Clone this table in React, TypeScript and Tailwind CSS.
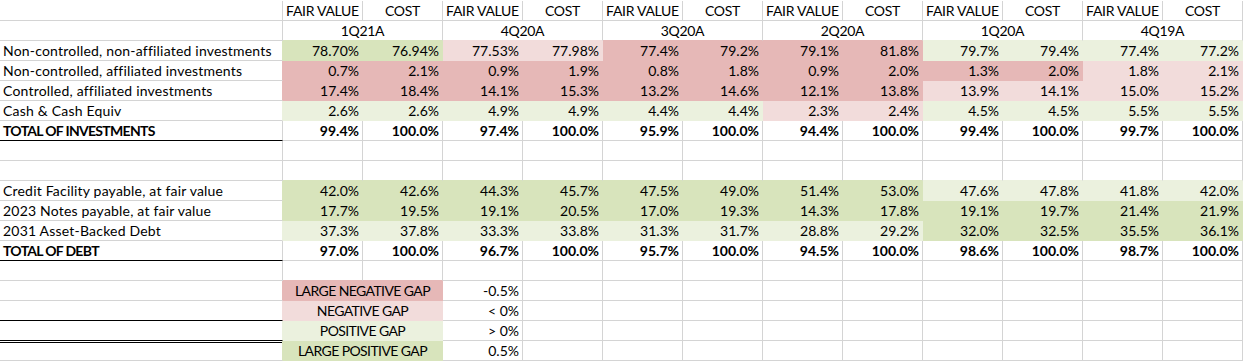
import React from "react";

type F = "DG" | "LG" | "DR" | "LP" | "";
type K = "label" | "labelBold" | "num" | "numBold" | "cap" | "legend" | "";
type Cell = {
  t?: string;
  f?: F;
  span?: number;
  a?: "l" | "c" | "r";
  k?: K;
  line?: "single" | "double";
};

const bg: Record<string, string> = {
  DG: "bg-[#d8e4bc]",
  LG: "bg-[#ebf1de]",
  DR: "bg-[#e6b8b7]",
  LP: "bg-[#f2dcdb]",
  "": "bg-white",
};
const br: Record<string, string> = {
  DG: "border-r-[#d8e4bc]",
  LG: "border-r-[#ebf1de]",
  DR: "border-r-[#e6b8b7]",
  LP: "border-r-[#f2dcdb]",
  "": "border-r-[#d4d4d4]",
};
const bb: Record<string, string> = {
  DG: "border-b-[#d8e4bc]",
  LG: "border-b-[#ebf1de]",
  DR: "border-b-[#e6b8b7]",
  LP: "border-b-[#f2dcdb]",
  "": "border-b-[#d4d4d4]",
  black: "border-b-black",
};
const kind: Record<string, string> = {
  label: "text-[14px] tracking-[0.2px]",
  labelBold: "text-[14px] font-bold tracking-[-0.7px]",
  num: "text-[14px]",
  numBold: "text-[14px] font-bold",
  cap: "text-[14px] tracking-[-0.3px]",
  legend: "text-[14px] tracking-[-0.6px]",
  "": "text-[14px]",
};

const quarters = ["1Q21A", "4Q20A", "3Q20A", "2Q20A", "1Q20A", "4Q19A"];

function dataRow(label: string, vals: string[], fills: F[], bold = false, line?: "single"): Cell[] {
  const cells: Cell[] = [{ t: label, a: "l", k: bold ? "labelBold" : "label", line }];
  vals.forEach((v, i) =>
    cells.push({ t: v, a: "r", k: bold ? "numBold" : "num", f: fills[Math.floor(i / 2)] })
  );
  return cells;
}

function emptyRow(line?: "single" | "double"): Cell[] {
  const cells: Cell[] = [{ line }];
  for (let i = 0; i < 12; i++) cells.push({});
  return cells;
}

function legendRow(name: string, val: string, f: F, line?: "single" | "double"): Cell[] {
  const cells: Cell[] = [
    { line },
    { t: name, f, span: 2, a: "c", k: "legend" },
    { t: val, a: "r", k: "num" },
  ];
  for (let i = 0; i < 9; i++) cells.push({});
  return cells;
}

const rows: Cell[][] = [
  [
    {},
    ...quarters.flatMap((): Cell[] => [
      { t: "FAIR VALUE", a: "c", k: "cap" },
      { t: "COST", a: "c", k: "cap" },
    ]),
  ],
  [{}, ...quarters.map((q): Cell => ({ t: q, a: "c", span: 2, k: "cap" }))],
  dataRow(
    "Non-controlled, non-affiliated investments",
    ["78.70%", "76.94%", "77.53%", "77.98%", "77.4%", "79.2%", "79.1%", "81.8%", "79.7%", "79.4%", "77.4%", "77.2%"],
    ["DG", "LP", "DR", "DR", "LG", "LG"]
  ),
  dataRow(
    "Non-controlled, affiliated investments",
    ["0.7%", "2.1%", "0.9%", "1.9%", "0.8%", "1.8%", "0.9%", "2.0%", "1.3%", "2.0%", "1.8%", "2.1%"],
    ["DR", "DR", "DR", "DR", "DR", "LP"]
  ),
  dataRow(
    "Controlled, affiliated investments",
    ["17.4%", "18.4%", "14.1%", "15.3%", "13.2%", "14.6%", "12.1%", "13.8%", "13.9%", "14.1%", "15.0%", "15.2%"],
    ["DR", "DR", "DR", "DR", "LP", "LP"]
  ),
  dataRow(
    "Cash & Cash Equiv",
    ["2.6%", "2.6%", "4.9%", "4.9%", "4.4%", "4.4%", "2.3%", "2.4%", "4.5%", "4.5%", "5.5%", "5.5%"],
    ["LG", "LG", "LG", "LP", "LG", "LG"]
  ),
  dataRow(
    "TOTAL OF INVESTMENTS",
    ["99.4%", "100.0%", "97.4%", "100.0%", "95.9%", "100.0%", "94.4%", "100.0%", "99.4%", "100.0%", "99.7%", "100.0%"],
    ["", "", "", "", "", ""],
    true,
    "single"
  ),
  emptyRow(),
  emptyRow(),
  dataRow(
    "Credit Facility payable, at fair value",
    ["42.0%", "42.6%", "44.3%", "45.7%", "47.5%", "49.0%", "51.4%", "53.0%", "47.6%", "47.8%", "41.8%", "42.0%"],
    ["DG", "DG", "DG", "DG", "LG", "LG"]
  ),
  dataRow(
    "2023 Notes payable, at fair value",
    ["17.7%", "19.5%", "19.1%", "20.5%", "17.0%", "19.3%", "14.3%", "17.8%", "19.1%", "19.7%", "21.4%", "21.9%"],
    ["DG", "DG", "DG", "DG", "DG", "DG"]
  ),
  dataRow(
    "2031 Asset-Backed Debt",
    ["37.3%", "37.8%", "33.3%", "33.8%", "31.3%", "31.7%", "28.8%", "29.2%", "32.0%", "32.5%", "35.5%", "36.1%"],
    ["LG", "LG", "LG", "LG", "DG", "DG"]
  ),
  dataRow(
    "TOTAL OF DEBT",
    ["97.0%", "100.0%", "96.7%", "100.0%", "95.7%", "100.0%", "94.5%", "100.0%", "98.6%", "100.0%", "98.7%", "100.0%"],
    ["", "", "", "", "", ""],
    true,
    "single"
  ),
  emptyRow(),
  legendRow("LARGE NEGATIVE GAP", "-0.5%", "DR"),
  legendRow("NEGATIVE GAP", "< 0%", "LP", "single"),
  legendRow("POSITIVE GAP", "> 0%", "LG", "single"),
  legendRow("LARGE POSITIVE GAP", "0.5%", "DG", "double"),
];

// expand fills per column for neighbor lookups
const fillGrid: F[][] = rows.map((r) => {
  const out: F[] = [];
  r.forEach((c) => {
    for (let i = 0; i < (c.span || 1); i++) out.push(c.f || "");
  });
  return out;
});

export default function App() {
  return (
    <div
      className="w-[1243px] h-[363px] bg-white pt-px overflow-hidden text-black"
      style={{ fontFamily: "Lato, 'Open Sans', sans-serif" }}
    >
      <div className="grid grid-cols-[283px_repeat(12,80px)]">
        {rows.map((r, ri) => {
          let col = 0;
          return r.map((c, ci) => {
            const start = col;
            const span = c.span || 1;
            col += span;
            const end = col;
            const f = c.f || "";
            const nextF = end < 13 ? fillGrid[ri][end] : "";
            const rightKey = f || nextF || "";
            const belowF = ri + 1 < rows.length ? fillGrid[ri + 1][start] : "";
            let bottomKey: string = f || belowF || "";
            if (c.line === "single" && ri !== rows.length - 1) bottomKey = "black";
            if (c.line === "double") bottomKey = f || "";
            const al =
              c.a === "l"
                ? "justify-start pl-[3px]"
                : c.a === "c"
                ? "justify-center"
                : "justify-end pr-[3px]";
            const spanCls = span === 2 ? "col-span-2" : "";
            const isDoubleSecond = c.line === "double";
            return (
              <div
                key={`${ri}-${ci}`}
                className={`relative h-[20px] flex items-center whitespace-nowrap overflow-hidden leading-[20px] border-r border-b ${spanCls} ${bg[f]} ${br[rightKey]} ${bb[bottomKey]} ${al} ${kind[c.k || ""]}`}
              >
                {isDoubleSecond && (
                  <div className="absolute left-0 right-0 top-px border-t border-black" />
                )}
                {c.t ?? ""}
              </div>
            );
          });
        })}
      </div>
    </div>
  );
}
